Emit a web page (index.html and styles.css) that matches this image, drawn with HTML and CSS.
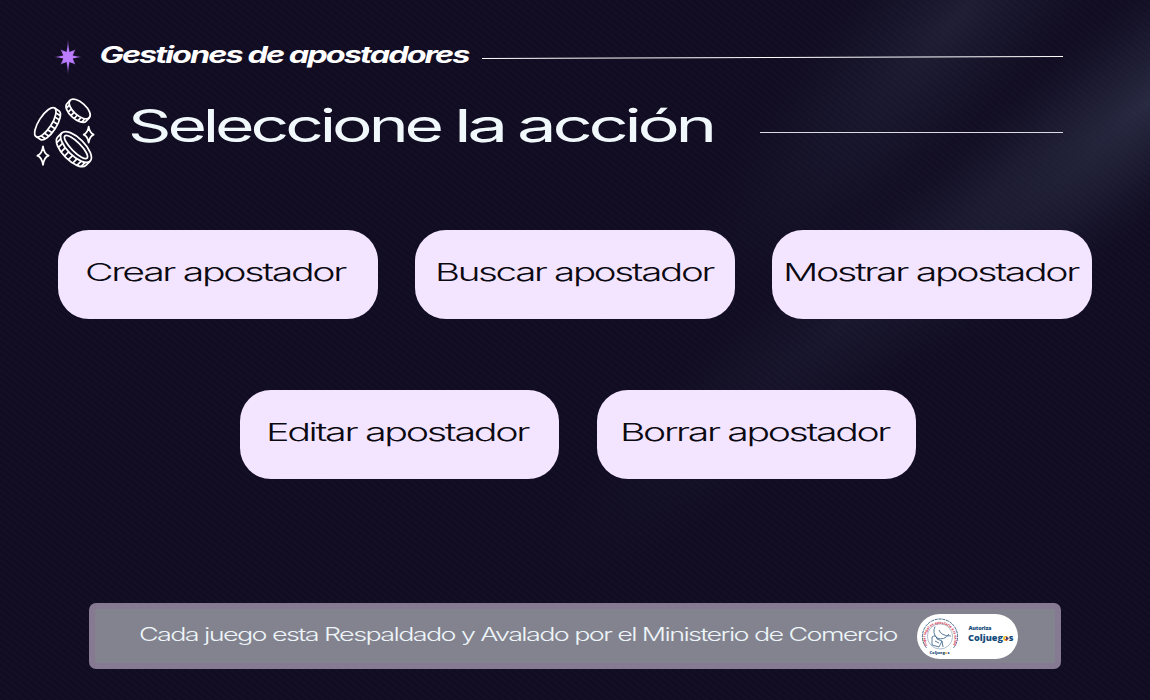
FILE: index.html
```html
<!DOCTYPE html>
<html lang="es">
<head>
<meta charset="utf-8">
<title>Gestiones de apostadores</title>
<link rel="stylesheet" href="styles.css">
</head>
<body>
<div class="page">
  <svg class="backdrop" width="1150" height="700" viewBox="0 0 1150 700" aria-hidden="true">
    <defs>
      <radialGradient id="beam"><stop offset="0" stop-color="#2d3048"/><stop offset=".5" stop-color="#23243a" stop-opacity=".58"/><stop offset="1" stop-color="#151127" stop-opacity="0"/></radialGradient>
      <pattern id="weave" width="6" height="5" patternUnits="userSpaceOnUse" patternTransform="rotate(38)"><rect width="6" height="2" fill="#3c4664" opacity=".055"/></pattern>
    </defs>
    <ellipse cx="955" cy="20" rx="400" ry="105" fill="url(#beam)" opacity=".5" transform="rotate(-47 955 20)"/>
    <ellipse cx="1150" cy="100" rx="440" ry="105" fill="url(#beam)" opacity=".85" transform="rotate(-40 1150 100)"/>
    <ellipse cx="850" cy="315" rx="440" ry="85" fill="url(#beam)" opacity=".3" transform="rotate(-41 850 315)"/>
    <rect width="1150" height="700" fill="url(#weave)"/>
  </svg>

  <header class="topline">
    <svg class="star" width="28" height="36" viewBox="-14 -18 28 36">
      <defs><radialGradient id="glow" gradientUnits="userSpaceOnUse" cx="0" cy="0" r="18"><stop offset=".35" stop-color="#bb7cff"/><stop offset="1" stop-color="#8450c8" stop-opacity=".3"/></radialGradient></defs>
      <path fill="url(#glow)" d="M0-18 1.4-5 7.5-7.5 4.6-1.6 13.5 0 4.6 1.6 7.5 7.5 1.4 5 0 18-1.4 5-7.5 7.5-4.6 1.6-13.5 0-4.6-1.6-7.5-7.5-1.4-5Z"/>
      <circle r="4.6" fill="#bb7cff"/>
    </svg>
    <svg class="wide section" width="369" height="30"><text x="-1.5" y="22" textLength="369" lengthAdjust="spacingAndGlyphs">Gestiones de apostadores</text></svg>
    <svg class="rule" width="581" height="6"><path d="M0 4.5 581 2.5"/></svg>
  </header>

  <div class="heading">
    <svg class="coins" width="70" height="80" viewBox="0 0 210 240">
      <g transform="translate(46 91) rotate(-57)"><ellipse rx="51" ry="19"/><path d="M51 0V16A51 19 0 0 1-51 16V0M-41 11V27M-29 16V32M-15 18V34M0 19V35M15 18V34M29 16V32M41 11V27"/></g>
      <g transform="translate(149 51) rotate(42)"><ellipse rx="39" ry="19"/><path d="M39 0V14A39 19 0 0 1-39 14V0M-31 12V25M-19 17V30M-6 19V32M7 19V32M20 17V30M31 12V25"/></g>
      <g transform="translate(138 165) rotate(45)"><ellipse rx="60" ry="26"/><ellipse rx="47" ry="14"/><path d="M60 0V18A60 26 0 0 1-60 18V0M-50 14V33M-36 21V39M-21 24V42M-5 26V44M11 26V43M27 23V41M41 19V37M52 13V30"/></g>
      <path d="M39 163Q42 186 56 191Q42 196 39 219Q36 196 22 191Q36 186 39 163ZM176 104Q179 123 191 128Q179 133 176 152Q173 133 161 128Q173 123 176 104Z"/>
    </svg>
    <svg class="wide title" width="583" height="60">
      <text y="45"><tspan x="-3" textLength="312" lengthAdjust="spacingAndGlyphs">Seleccione</tspan> <tspan x="323" textLength="50" lengthAdjust="spacingAndGlyphs">la</tspan> <tspan x="386" textLength="196" lengthAdjust="spacingAndGlyphs">acción</tspan></text>
    </svg>
    <div class="divider"></div>
  </div>

  <main class="actions">
    <div class="row">
      <button class="action"><svg class="wide" width="260" height="34"><text x="-2" y="26" textLength="260" lengthAdjust="spacingAndGlyphs">Crear apostador</text></svg></button>
      <button class="action"><svg class="wide" width="277" height="34"><text x="-3" y="26" textLength="278" lengthAdjust="spacingAndGlyphs">Buscar apostador</text></svg></button>
      <button class="action"><svg class="wide" width="293" height="34"><text x="-3" y="26" textLength="295" lengthAdjust="spacingAndGlyphs">Mostrar apostador</text></svg></button>
    </div>
    <div class="row">
      <button class="action"><svg class="wide" width="261" height="34"><text x="-2" y="26" textLength="262" lengthAdjust="spacingAndGlyphs">Editar apostador</text></svg></button>
      <button class="action"><svg class="wide" width="268" height="34"><text x="-3" y="26" textLength="269" lengthAdjust="spacingAndGlyphs">Borrar apostador</text></svg></button>
    </div>
  </main>

  <footer class="footer">
    <svg class="wide notice" width="758" height="28"><text x="-1" y="20" textLength="758" lengthAdjust="spacingAndGlyphs">Cada juego esta Respaldado y Avalado por el Ministerio de Comercio</text></svg>
    <svg class="badge" width="101" height="45" viewBox="0 0 101 45">
      <defs><path id="slogan" d="M10.5 32A14.6 14.6 0 1 1 35.5 32"/></defs>
      <rect width="101" height="45" rx="22.5" fill="#fff"/>
      <path d="M9.4 33.8A17.6 17.6 0 1 1 36.6 33.8" fill="none" stroke="#41678b" stroke-width="1" stroke-dasharray="3 .8"/>
      <circle cx="23" cy="22.4" r="12.6" fill="none" stroke="#7892aa" stroke-width=".6"/>
      <text class="slogan"><textPath href="#slogan" textLength="60" lengthAdjust="spacingAndGlyphs">Jugar legal es apostarle a la salud</textPath></text>
      <path d="M18 12.5Q15 19 20 24Q27 27 32 20M22 16Q24 22 34 22M15 23Q19 20 20 25L25 27 22 33 15 31ZM18 27 22 29M25 27 26 33" fill="none" stroke="#315c84" stroke-width=".8"/>
      <g class="brand">
        <text x="12.5" y="40.2" font-size="4" textLength="20">Coljueg<tspan fill="#e5a51c">o</tspan>s</text>
        <text x="51.5" y="16" font-size="5.5" textLength="23">Autoriza</text>
        <text x="51" y="27" font-size="9.2" textLength="45.5" lengthAdjust="spacingAndGlyphs">Coljueg<tspan fill="#f3b51b">o</tspan>s</text>
      </g>
      <path d="M89 22.3 91.8 24.5 89 26.7Z" fill="#243f87"/><path d="M87.8 25 89.6 24.8V27Z" fill="#d52d44"/>
    </svg>
  </footer>
</div>
</body>
</html>
```
FILE: styles.css
```css
* { box-sizing: border-box; }
body { margin: 0; background: #100b20; font-family: Inter, "Liberation Sans", sans-serif; }
svg { display: block; flex: none; overflow: visible; }

.page { position: relative; width: 1150px; height: 700px; overflow: hidden; display: flex; flex-direction: column; background: #110c21; }
.backdrop { position: absolute; inset: 0; overflow: hidden; }
.topline, .heading, .actions, .footer { position: relative; }
.wide { letter-spacing: -.06em; }

.topline { display: flex; height: 36px; margin: 39px 0 0 54px; }
.section { margin: 1.5px 0 0 18.5px; font-size: 22.5px; font-weight: 700; font-style: italic; fill: #fff; }
.rule { margin: 15px 0 0 12.5px; fill: none; stroke: #fff; stroke-width: 1; }

.heading { display: flex; height: 80px; margin: 17px 0 0 30px; }
.coins { fill: none; stroke: #fff; stroke-width: 5.2; stroke-linejoin: round; }
.title { margin: 5px 0 0 31px; font-size: 45px; font-weight: 400; fill: #f0f8fb; }
.divider { width: 303px; height: 1px; margin: 40px 0 0 46px; background: #dddbe2; }

.actions { display: flex; flex-direction: column; gap: 71px; margin-top: 58px; }
.row { display: flex; gap: 37px; padding-left: 58px; }
.row + .row { padding-left: 239.5px; gap: 37.5px; }
.action { display: flex; align-items: flex-start; width: 320px; height: 89px; padding: 24.5px 0 0 28.5px; border: 0; border-radius: 31px; background: #f3e5ff; color: #0b0911; font-family: inherit; font-size: 24.5px; font-weight: 300; fill: currentColor; }
.action:nth-child(2) { padding-left: 22.5px; }
.action:nth-child(3) { padding-left: 14px; }
.row + .row .action { width: 319.5px; }
.row + .row .action:nth-child(2) { padding-left: 26.5px; }

.footer { display: flex; width: 972.5px; height: 66px; margin: 124.4px 0 0 88.5px; padding: 4.5px 0 0 45.5px; border: 6px solid #867a92; border-radius: 7px; background: #83838f; }
.notice { margin-top: 7px; font-size: 18.3px; font-weight: 300; fill: #edf5f8; }
.badge { margin-left: 19px; }
.slogan { font-size: 3.7px; font-weight: 700; fill: #d23a55; }
.brand { font-family: "Open Sans", sans-serif; font-weight: 800; fill: #164c7c; }
```
